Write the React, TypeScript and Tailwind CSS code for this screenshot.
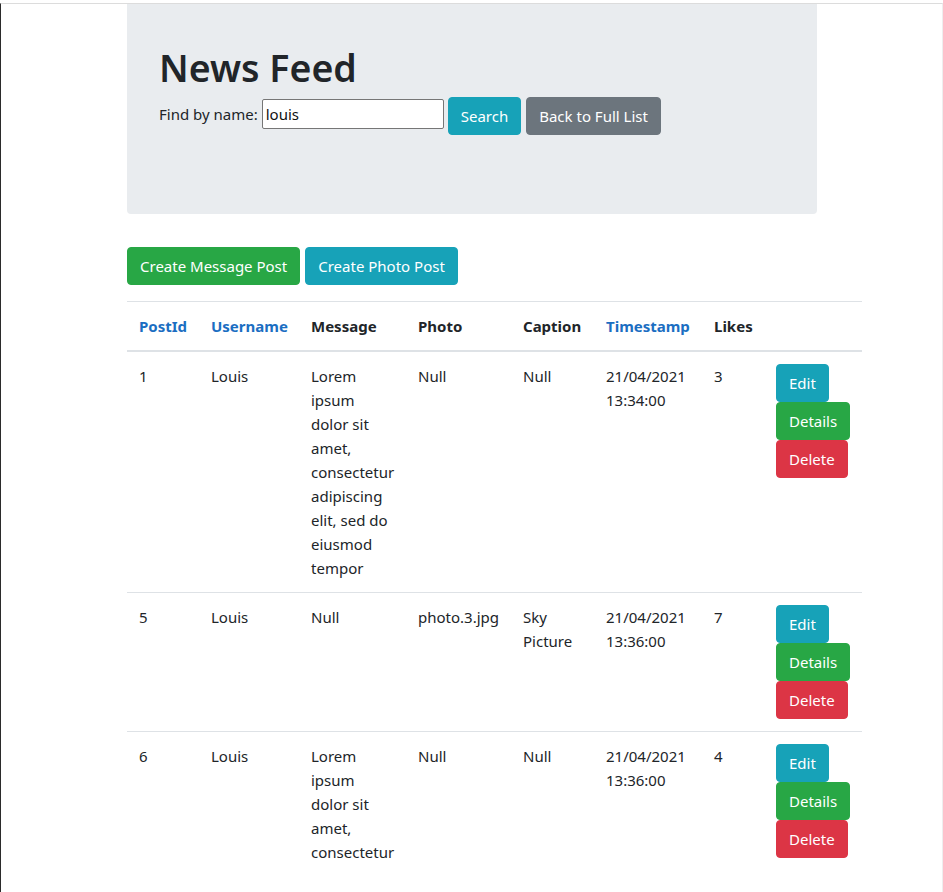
import React from "react";

type Row = {
  id: string;
  user: string;
  message: string[];
  photo: string;
  caption: string[];
  time: string[];
  likes: string;
};

const lorem = [
  "Lorem",
  "ipsum",
  "dolor sit",
  "amet,",
  "consectetur",
  "adipiscing",
  "elit, sed do",
  "eiusmod",
  "tempor",
];

const rows: Row[] = [
  { id: "1", user: "Louis", message: lorem, photo: "Null", caption: ["Null"], time: ["21/04/2021", "13:34:00"], likes: "3" },
  { id: "5", user: "Louis", message: ["Null"], photo: "photo.3.jpg", caption: ["Sky", "Picture"], time: ["21/04/2021", "13:36:00"], likes: "7" },
  { id: "6", user: "Louis", message: ["Lorem", "ipsum", "dolor sit", "amet,", "consectetur"], photo: "Null", caption: ["Null"], time: ["21/04/2021", "13:36:00"], likes: "4" },
];

function Lines({ lines }: { lines: string[] }) {
  return (
    <>
      {lines.map((l, i) => (
        <div key={i} className="whitespace-nowrap">
          {l}
        </div>
      ))}
    </>
  );
}

const btn = "inline-block whitespace-nowrap px-3 py-1.5 text-[15px] leading-6 text-white border rounded-[4px]";

export default function App() {
  return (
    <div
      className="min-h-screen bg-white pt-[3px] text-[#212529] text-[15px] leading-6"
      style={{ fontFamily: '"Noto Sans", "Open Sans", sans-serif' }}
    >
      <div className="min-h-[889px] border-t border-t-[#dcdcdc] border-l border-l-[#2b2b2b] border-r border-r-[#eeeeee]">
        <div className="ml-[126px] w-[735px]">
          <div className="w-[690px] h-[210px] bg-[#e9ecef] rounded-b-[4px] pl-8 pt-[41px]">
            <h1 className="text-[37.5px] leading-[45px] font-semibold mb-[7px]">News Feed</h1>
            <div className="flex items-center">
              <span className="mr-[4px] mb-[4px]">Find by name:</span>
              <input
                defaultValue="louis"
                className="w-[182px] h-[30px] mb-[4px] border border-[#767676] rounded-[2px] bg-white px-[3px] text-[15px] text-[#111] outline-none"
                style={{ fontFamily: '"Noto Sans", sans-serif' }}
              />
              <button className={`${btn} ml-[4px] bg-[#17a2b8] border-[#17a2b8]`}>Search</button>
              <button className={`${btn} ml-[5px] bg-[#6c757d] border-[#6c757d]`}>Back to Full List</button>
            </div>
          </div>

          <div className="mt-[33px] flex gap-[5px]">
            <button className={`${btn} bg-[#28a745] border-[#28a745]`}>Create Message Post</button>
            <button className={`${btn} bg-[#17a2b8] border-[#17a2b8]`}>Create Photo Post</button>
          </div>

          <table className="mt-4 w-[735px] table-fixed border-collapse">
            <colgroup>
              <col className="w-[72px]" />
              <col className="w-[100px]" />
              <col className="w-[107px]" />
              <col className="w-[105px]" />
              <col className="w-[83px]" />
              <col className="w-[108px]" />
              <col className="w-[62px]" />
              <col className="w-[98px]" />
            </colgroup>
            <thead>
              <tr className="text-left font-bold">
                <th className="p-3 border-t border-t-[#dee2e6] border-b-2 border-b-[#dee2e6] text-[#1b6ec2]">PostId</th>
                <th className="p-3 border-t border-t-[#dee2e6] border-b-2 border-b-[#dee2e6] text-[#1b6ec2]">Username</th>
                <th className="p-3 border-t border-t-[#dee2e6] border-b-2 border-b-[#dee2e6]">Message</th>
                <th className="p-3 border-t border-t-[#dee2e6] border-b-2 border-b-[#dee2e6]">Photo</th>
                <th className="p-3 border-t border-t-[#dee2e6] border-b-2 border-b-[#dee2e6]">Caption</th>
                <th className="p-3 border-t border-t-[#dee2e6] border-b-2 border-b-[#dee2e6] text-[#1b6ec2]">Timestamp</th>
                <th className="p-3 border-t border-t-[#dee2e6] border-b-2 border-b-[#dee2e6]">Likes</th>
                <th className="p-3 border-t border-t-[#dee2e6] border-b-2 border-b-[#dee2e6]"></th>
              </tr>
            </thead>
            <tbody>
              {rows.map((r) => (
                <tr key={r.id} className="align-top">
                  <td className="p-3 border-t border-t-[#dee2e6]">{r.id}</td>
                  <td className="p-3 border-t border-t-[#dee2e6]">{r.user}</td>
                  <td className="p-3 border-t border-t-[#dee2e6]">
                    <Lines lines={r.message} />
                  </td>
                  <td className="p-3 border-t border-t-[#dee2e6] whitespace-nowrap">{r.photo}</td>
                  <td className="p-3 border-t border-t-[#dee2e6]">
                    <Lines lines={r.caption} />
                  </td>
                  <td className="p-3 border-t border-t-[#dee2e6]">
                    <Lines lines={r.time} />
                  </td>
                  <td className="p-3 border-t border-t-[#dee2e6]">{r.likes}</td>
                  <td className="p-3 border-t border-t-[#dee2e6]">
                    <div className="flex flex-col items-start">
                      <button className={`${btn} bg-[#17a2b8] border-[#17a2b8]`}>Edit</button>
                      <button className={`${btn} bg-[#28a745] border-[#28a745]`}>Details</button>
                      <button className={`${btn} bg-[#dc3545] border-[#dc3545]`}>Delete</button>
                    </div>
                  </td>
                </tr>
              ))}
            </tbody>
          </table>
        </div>
      </div>
    </div>
  );
}
